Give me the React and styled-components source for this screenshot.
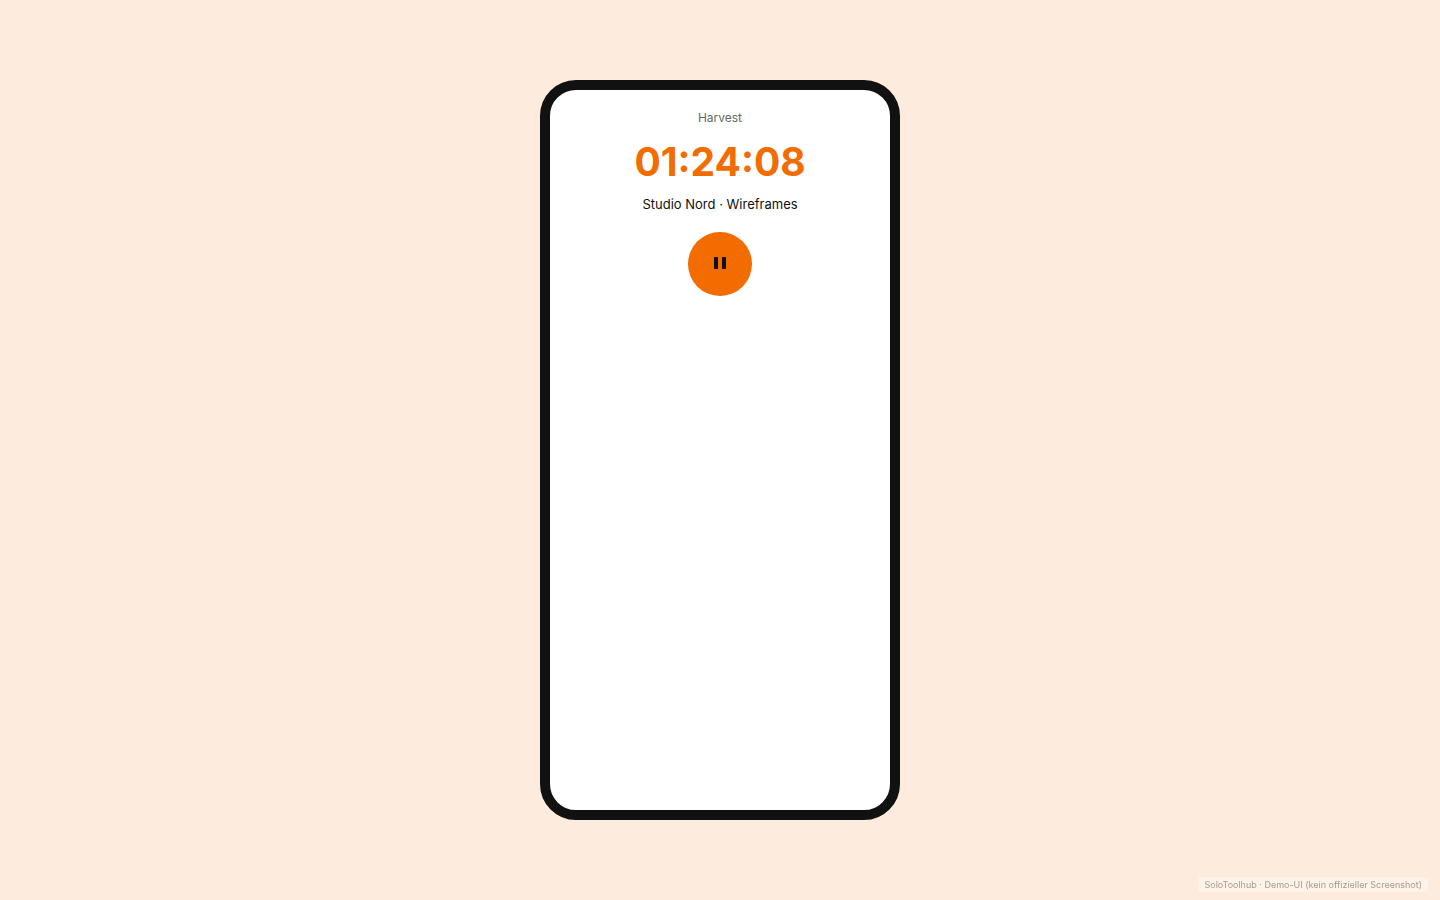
import React from "react";
import styled, { createGlobalStyle } from "styled-components";

const GlobalStyle = createGlobalStyle`
  * { box-sizing: border-box; }
  body {
    margin: 0;
    background: #fdebdd;
    color: #111;
    font-family: Inter, "Liberation Sans", sans-serif;
  }
`;

const Page = styled.main`
  min-height: 100vh;
  display: grid;
  place-items: center;
`;

const Phone = styled.section`
  width: 360px;
  height: 740px;
  padding: 20px;
  border: 10px solid #111;
  border-radius: 36px;
  background: #fff;
  display: flex;
  flex-direction: column;
  align-items: center;
`;

const AppName = styled.div`
  font-size: 12px;
  line-height: 15px;
  color: #666;
`;

const Timer = styled.div`
  margin: 12px 0 10px;
  font-size: 39px;
  line-height: 49px;
  font-weight: 700;
  color: #f36c00;
`;

const Task = styled.div`
  font-size: 13px;
  line-height: 16px;
`;

const PauseButton = styled.button`
  width: 64px;
  height: 64px;
  margin-top: 20px;
  padding: 0;
  border: 0;
  border-radius: 50%;
  background: #f36c00;
  color: #111;
  display: grid;
  place-items: center;
`;

const Note = styled.footer`
  position: fixed;
  right: 12px;
  bottom: 8px;
  padding: 2px 6px;
  border-radius: 4px;
  background: rgba(255, 255, 255, 0.35);
  font-size: 9px;
  line-height: 11px;
  color: #a59b95;
`;

export default function App() {
  return (
    <>
      <GlobalStyle />
      <Page>
        <Phone>
          <AppName>Harvest</AppName>
          <Timer>01:24:08</Timer>
          <Task>Studio Nord · Wireframes</Task>
          <PauseButton type="button" aria-label="Pause">
            <svg width="12" height="14" viewBox="0 0 12 14" fill="currentColor">
              <rect x="0" y="0" width="4" height="12" rx="0.5" />
              <rect x="8" y="0" width="4" height="12" rx="0.5" />
            </svg>
          </PauseButton>
        </Phone>
      </Page>
      <Note>SoloToolhub · Demo-UI (kein offizieller Screenshot)</Note>
    </>
  );
}
